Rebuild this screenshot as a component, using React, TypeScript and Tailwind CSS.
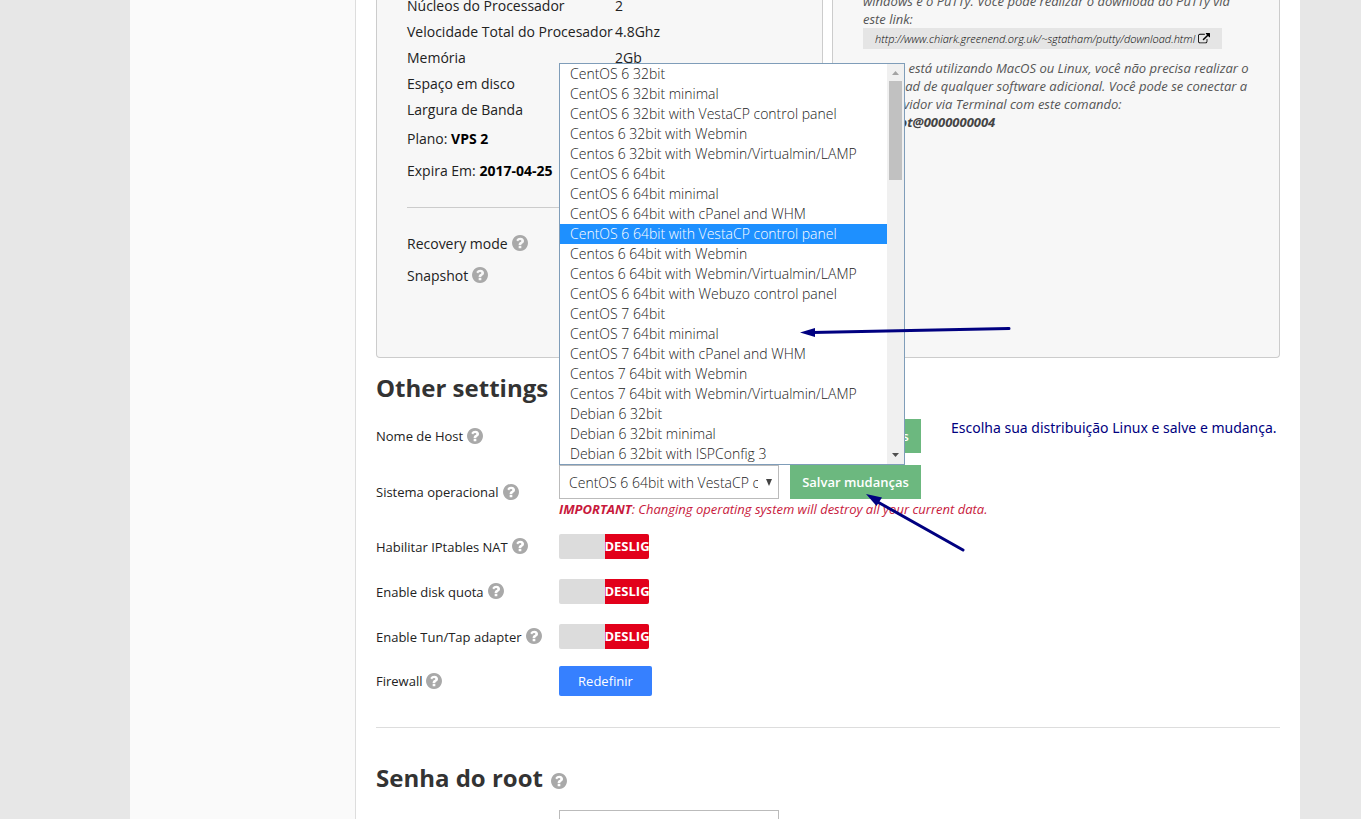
import type { ReactNode } from "react";

const systems = [
  "CentOS 6 32bit",
  "CentOS 6 32bit minimal",
  "CentOS 6 32bit with VestaCP control panel",
  "Centos 6 32bit with Webmin",
  "Centos 6 32bit with Webmin/Virtualmin/LAMP",
  "CentOS 6 64bit",
  "CentOS 6 64bit minimal",
  "CentOS 6 64bit with cPanel and WHM",
  "CentOS 6 64bit with VestaCP control panel",
  "Centos 6 64bit with Webmin",
  "Centos 6 64bit with Webmin/Virtualmin/LAMP",
  "CentOS 6 64bit with Webuzo control panel",
  "CentOS 7 64bit",
  "CentOS 7 64bit minimal",
  "CentOS 7 64bit with cPanel and WHM",
  "Centos 7 64bit with Webmin",
  "Centos 7 64bit with Webmin/Virtualmin/LAMP",
  "Debian 6 32bit",
  "Debian 6 32bit minimal",
  "Debian 6 32bit with ISPConfig 3",
];
const current = "CentOS 6 64bit with VestaCP control panel";

const specs = [
  ["Núcleos do Processador", "2"],
  ["Velocidade Total do Procesador", "4.8Ghz"],
  ["Memória", "2Gb"],
  ["Espaço em disco", ""],
  ["Largura de Banda", ""],
];

function Help() {
  return (
    <button type="button" aria-label="Ajuda" className="ml-1 inline-block align-middle text-[#a9a9a9]">
      <svg viewBox="128 128 1536 1536" className="mb-[3px] size-4" fill="currentColor" aria-hidden="true">
        <path d="M1024 1376v-192q0-14-9-23t-23-9h-192q-14 0-23 9t-9 23v192q0 14 9 23t23 9h192q14 0 23-9t9-23zm256-672q0-88-55.5-163t-138.5-116-170-41q-243 0-371 213-15 24 8 42l132 100q7 6 19 6 16 0 25-12 53-68 86-92 34-24 86-24 48 0 85.5 26t37.5 59q0 38-20 61t-68 45q-63 28-115.5 86.5t-52.5 125.5v36q0 14 9 23t23 9h192q14 0 23-9t9-23q0-19 21.5-49.5t54.5-49.5q32-18 49-28.5t46-35 44.5-48 28-60.5 12.5-81zm384 192q0 209-103 385.5t-279.5 279.5-385.5 103-385.5-103-279.5-279.5-103-385.5 103-385.5 279.5-279.5 385.5-103 385.5 103 279.5 279.5 103 385.5z" />
      </svg>
    </button>
  );
}

function ExternalIcon() {
  return (
    <svg viewBox="0 0 1792 1792" className="ml-[3px] inline-block size-3 align-[-2px]" fill="currentColor" aria-hidden="true">
      <path d="M1408 928v320q0 119-84.5 203.5t-203.5 84.5h-832q-119 0-203.5-84.5t-84.5-203.5v-832q0-119 84.5-203.5t203.5-84.5h704q14 0 23 9t9 23v64q0 14-9 23t-23 9h-704q-66 0-113 47t-47 113v832q0 66 47 113t113 47h832q66 0 113-47t47-113v-320q0-14 9-23t23-9h64q14 0 23 9t9 23zm384-864v512q0 26-19 45t-45 19-45-19l-176-176-652 652q-10 10-23 10t-23-10l-114-114q-10-10-10-23t10-23l652-652-176-176q-19-19-19-45t19-45 45-19h512q26 0 45 19t19 45z" />
    </svg>
  );
}

function Row({ label, id, children }: { label: string; id: string; children: ReactNode }) {
  return (
    <div className="flex items-center">
      <div className="flex w-[183px] shrink-0 items-center pt-[2px]">
        <label htmlFor={id}>{label}</label>
        <Help />
      </div>
      {children}
    </div>
  );
}

function Toggle({ id }: { id: string }) {
  return (
    <label className="relative flex h-[25px] w-[90px] overflow-hidden rounded-xs bg-[#dcdcdc]">
      <input id={id} type="checkbox" role="switch" className="absolute inset-0 size-full cursor-pointer opacity-0" />
      <span className="ml-auto flex w-[44px] items-center justify-center bg-[#e2001a] text-[13px] font-bold text-white">
        DESLIG
      </span>
    </label>
  );
}

function SaveButton() {
  return (
    <button type="button" className="ml-[11px] h-[34px] w-[131px] bg-[#6cb87f] pt-px text-[13px] font-semibold text-white">
      Salvar mudanças
    </button>
  );
}

function SystemList() {
  return (
    <div className="absolute bottom-full left-0 z-10 flex w-[346px] border border-[#7f9db9] bg-white">
      <ul role="listbox" aria-label="Sistema operacional" className="flex-1 text-sm/5 font-light text-[#222]">
        {systems.map((name) => (
          <li
            key={name}
            role="option"
            aria-selected={name === current}
            className={name === current ? "bg-[#1e90ff] pl-[10px] text-white" : "pl-[10px]"}
          >
            {name}
          </li>
        ))}
      </ul>
      <div className="flex w-[17px] flex-col items-center bg-[#f0f0f0]" aria-hidden="true">
        <svg viewBox="0 0 17 17" className="size-[17px]">
          <path d="M5 11 8.500 7 12 11z" fill="#a3a3a3" />
        </svg>
        <div className="h-[99px] w-[13px] bg-[#c1c1c1]" />
        <svg viewBox="0 0 17 17" className="mt-auto size-[17px]">
          <path d="M5 6 8.500 10 12 6z" fill="#505050" />
        </svg>
      </div>
    </div>
  );
}

export default function App() {
  return (
    <div className="h-screen overflow-hidden bg-[#e7e7e7] pr-[61px] pl-[130px] font-['Open_Sans',sans-serif] text-[13px] text-[#222]">
      <div className="flex h-full bg-white">
        <aside className="w-[226px] shrink-0 border-r border-[#ddd] bg-[#fafafa]" />
        <main className="relative min-w-0 flex-1 px-5">
          <div className="grid h-[358px] grid-cols-[447fr_448fr] gap-[9px]">
            <section className="rounded-b-sm border border-t-0 border-[#ccc] bg-[#f7f7f7] px-[30px] text-sm">
              <table className="-mt-[7px] w-full">
                <tbody>
                  {specs.map(([name, value]) => (
                    <tr key={name} className="h-[26px]">
                      <th scope="row" className="w-[208px] p-0 text-left font-normal whitespace-nowrap">
                        {name}
                      </th>
                      <td className="p-0">{value}</td>
                    </tr>
                  ))}
                </tbody>
              </table>
              <p className="h-8 leading-8">
                Plano: <strong className="text-black">VPS 2</strong>
              </p>
              <p className="h-8 leading-8">
                Expira Em: <strong className="text-black">2017-04-25</strong>
              </p>
              <hr className="mt-5 mb-5 border-[#ccc]" />
              <div className="flex h-8 items-center">
                Recovery mode
                <Help />
              </div>
              <div className="flex h-8 items-center">
                Snapshot
                <Help />
              </div>
            </section>
            <section className="rounded-b-sm border border-t-0 border-[#ccc] bg-[#f7f7f7] px-[30px] text-[13px]/[18px] text-[#555] italic">
              <p className="-mt-2 whitespace-nowrap">
                windows e o PuTTy. Você pode realizar o download do PuTTy via
                <br />
                este link:
              </p>
              <a
                href="#putty"
                className="inline-block bg-[#e5e5e5] px-3 text-[11px]/[21px] font-light whitespace-nowrap text-black"
              >
                http://www.chiark.greenend.org.uk/~sgtatham/putty/download.html
                <ExternalIcon />
              </a>
              <p className="mt-[10px] whitespace-nowrap">
                Se você está utilizando MacOS ou Linux, você não precisa realizar o
                <br />
                download de qualquer software adicional. Você pode se conectar a
                <br />
                seu servidor via Terminal com este comando:
                <br />
                <strong className="text-[#444]">ssh root@0000000004</strong>
              </p>
            </section>
          </div>

          <h2 className="mt-3 text-2xl/9 font-bold text-[#333]">Other settings</h2>
          <form className="mt-[13px]">
            <Row label="Nome de Host" id="host">
              <input id="host" type="text" className="h-[34px] w-[220px] border border-[#bbb] bg-white px-[10px]" />
              <SaveButton />
            </Row>
            <div className="mt-3">
              <Row label="Sistema operacional" id="system">
                <div className="relative">
                  <SystemList />
                  <div className="flex">
                    <div className="relative">
                      <select
                        id="system"
                        defaultValue={current}
                        className="block h-[34px] w-[220px] appearance-none border border-[#bbb] bg-white pt-px pr-5 pl-[9px] text-sm font-light text-[#222]"
                      >
                        {systems.map((name) => (
                          <option key={name}>{name}</option>
                        ))}
                      </select>
                      <svg viewBox="0 0 8 7" className="pointer-events-none absolute top-[14px] right-[6px] h-[7px] w-2" aria-hidden="true">
                        <path d="M1 0h6L4 7z" fill="#444" />
                      </svg>
                    </div>
                    <SaveButton />
                  </div>
                  <p className="text-[13px]/5 whitespace-nowrap text-[#c8193c] italic">
                    <strong>IMPORTANT</strong>: Changing operating system will destroy all your current data.
                  </p>
                </div>
              </Row>
            </div>
            <div className="mt-[15px] flex flex-col gap-5">
              <Row label="Habilitar IPtables NAT" id="nat">
                <Toggle id="nat" />
              </Row>
              <Row label="Enable disk quota" id="quota">
                <Toggle id="quota" />
              </Row>
              <Row label="Enable Tun/Tap adapter" id="tun">
                <Toggle id="tun" />
              </Row>
            </div>
            <div className="mt-[17px]">
              <Row label="Firewall" id="firewall">
                <button id="firewall" type="button" className="h-[30px] w-[93px] rounded-xs bg-[#3680ff] pt-px text-[13px] text-white">
                  Redefinir
                </button>
              </Row>
            </div>
          </form>
          <hr className="mt-[31px] border-[#ddd]" />
          <h2 className="mt-8 flex items-center text-2xl/9 font-bold text-[#333]">
            Senha do root
            <span className="ml-1 flex pt-2">
              <Help />
            </span>
          </h2>
          <input
            type="password"
            aria-label="Senha do root"
            className="mt-[14px] ml-[183px] block h-[34px] w-[220px] border border-[#bbb] bg-white px-[10px]"
          />

          <p className="absolute top-[418px] left-[595px] font-['Noto_Sans',sans-serif] text-sm/5 whitespace-nowrap text-[#000080]">
            Escolha sua distribuição Linux e salve e mudança.
          </p>
          <svg viewBox="0 0 212 12" className="absolute top-[325px] left-[444px] z-20 h-3 w-[212px]" aria-hidden="true">
            <path d="M12 7.500 209 3.500" stroke="#000080" strokeWidth="3" strokeLinecap="round" />
            <path d="M0 7.500 15 3v9z" fill="#000080" />
          </svg>
          <svg viewBox="0 0 100 60" className="absolute top-[493px] left-[510px] z-20 h-[60px] w-[100px]" aria-hidden="true">
            <path d="M10 8 97 57" stroke="#000080" strokeWidth="3" strokeLinecap="round" />
            <path d="M0 1 16 4.500 10.500 13z" fill="#000080" />
          </svg>
        </main>
      </div>
    </div>
  );
}
